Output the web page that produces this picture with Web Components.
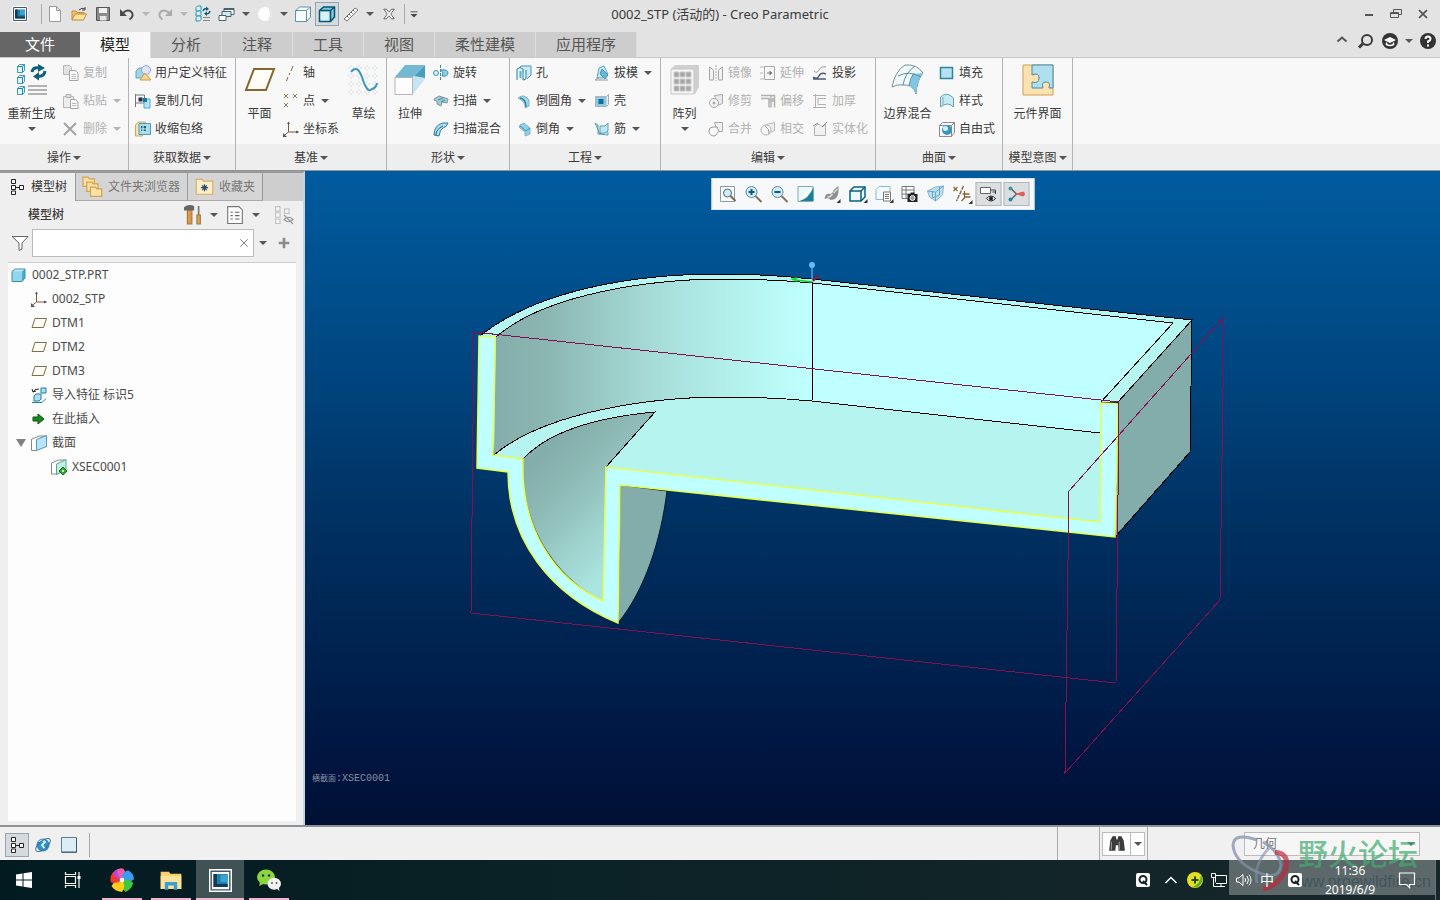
<!DOCTYPE html>
<html lang="zh-CN">
<head>
<meta charset="utf-8">
<title>0002_STP (活动的) - Creo Parametric</title>
<style>
	body {
		margin: 0;
		font-family: "Noto Sans", "Noto Sans CJK SC", sans-serif;
		font-size: 12px;
		line-height: 20px;
		color: #3a3a3a;
		--bar: #e3e3e3;
		--line: #b4b4b4;
		--muted: #b2b2b2;
	}
</style>
</head>
<body>
<cad-app></cad-app>

<script>
// icons are drawn on a 16 unit grid, the large ones on a 32 unit grid
const BLUE = '#2b8fb8';
const cubeSmall = (x, y) => `<path d="M${x} ${y + 1.5}l1.5-1.5h3.500v3.500l-1.500 1.500h-3.500z" fill="#d8f0fa" stroke="${BLUE}"/>`;
const folder = (x, y) => `<path d="M${x} ${y}h4l1 1.500h4v6h-9z" fill="#fbe2ab" stroke="#d3a34f"/>`;
const ICONS = {
	app: '<path d="M0 0h16v16h-16z" fill="#fff"/><path d="M1.500 1.500h13v13h-13z" fill="#f5fafc" stroke="#456"/><path d="M4 3.500h9v9h-9z" fill="#1c7fae"/><path d="M3 3.500h2.500v7h7.500v2h-10z" fill="#173a52"/><path d="M8 4h5v5h-5z" fill="#3aa3cf"/>',
	new: '<path d="M2.500.5h7l4 4v11h-11zM9.500.5v4h4" fill="#fff" stroke="#9a9a9a"/>',
	open: '<path d="M1 14v-9h4l1 1.500h7v3" fill="#f2c36b" stroke="#c28a35"/><path d="M1 14l3-6h11.500l-3 6z" fill="#ffe2a6" stroke="#c28a35"/><path d="M8 4q3-3 6-1m0-2v3h-3" fill="none" stroke="#444"/>',
	save: '<path d="M1.500 1.500h13v13h-13z" fill="#8b8b8b" stroke="#555"/><path d="M4 2h8v5h-8z" fill="#f0f0f0"/><path d="M5 10h6.500v4.500h-6.500z" fill="#e5e5e5"/>',
	undo: '<path d="M4 7q4-4 8-1.500q4 4-1.500 8" fill="none" stroke="#4a4a4a" stroke-width="2"/><path d="M1 3v7h7z" fill="#4a4a4a"/>',
	redo: '<path d="M12 7q-4-4-8-1.500q-4 4 1.500 8" fill="none" stroke="#aaa" stroke-width="2"/><path d="M15 3v7h-7z" fill="#aaa"/>',
	regen: `<g>${cubeSmall(1, 0)}${cubeSmall(1, 5)}${cubeSmall(1, 10)}</g><path d="M8 11.500h7m-7 3h7" stroke="#888"/><path d="M8 5q1-3 4-2m3 2q-1 3.500-4 2.500" fill="none" stroke="#0d6077" stroke-width="1.500"/><path d="M11 .5l3 2.500-3 2zM12 5.500l-3 2 3 2.500z" fill="#0d6077"/>`,
	windows: '<path d="M5 2.500h10v6h-10z" fill="#fff" stroke="#47636e"/><path d="M3 5.500h9v5h-9z" fill="#cfeaf5" stroke="#47636e"/><path d="M0 9.500h7v5h-7z" fill="#fff" stroke="#47636e"/><path d="M5 3.500h10" stroke="#47636e"/>',
	sphere: '<circle cx="8" cy="8" r="7" fill="#fff"/><path d="M12 3q4 5 0 10" fill="none" stroke="#d0d0d0"/>',
	box: '<path d="M.5 4.500l4-3.500h11v10l-4 4.500h-11z" fill="#f7fdff" stroke="#5d94a8"/><path d="M.5 4.500h11v11m0-11l4-3.500" fill="none" stroke="#5d94a8"/>',
	boxDark: '<path d="M.5 4.500l4-3.500h11v10l-4 4.500h-11z" fill="#7fc9e3" stroke="#0a5570" stroke-width="1.500"/><path d="M1.500 5.500h9v9h-9z" fill="#d7f1fa"/><path d="M.5 4.500h11v11m0-11l4-3.500" fill="none" stroke="#0a5570" stroke-width="1.500"/>',
	ruler: '<path d="M1 13l11-11 3 2-11 11z" fill="#fff" stroke="#777"/><path d="M4 10l1.500 1.500m.5-3.500l1.500 1.500m.5-3.500l1.500 1.500m.5-3.500l1.500 1.500" stroke="#555"/>',
	closeWin: '<path d="M2 2.500h3l3 3.500 3-3.500h3l-4 5.500 4 5.500h-3l-3-3.500-3 3.500h-3l4-5.500z" fill="#fff" stroke="#555"/>',
	minimize: '<path d="M4 9h8" stroke="#555" stroke-width="2"/>',
	restore: '<path d="M5.500 6v-2.500h8v5h-3" fill="none" stroke="#555"/><path d="M2.500 6.500h8v5h-8zM2.500 7.500h8" fill="none" stroke="#555"/>',
	close: '<path d="M3.500 3.500l9 9m0-9l-9 9" stroke="#555" stroke-width="2"/>',
	clear: '<path d="M3 3l10 10m0-10l-10 10" stroke="#777" stroke-width="1.200"/>',
	up: '<path d="M3.500 8.500l4.500-4 4.500 4" fill="none" stroke="#555" stroke-width="2"/>',
	search: '<circle cx="9" cy="7" r="5" fill="none" stroke="#3a3a3a" stroke-width="2"/><path d="M5 10.500l-4 4" stroke="#3a3a3a" stroke-width="3"/>',
	learn: '<circle cx="8" cy="8" r="8" fill="#333"/><path d="M2 7l6-3 6 3-6 3z" fill="#fff"/><path d="M4.500 9.500v2q3.500 2 7 0v-2" fill="none" stroke="#fff" stroke-width="1.500"/>',
	help: '<circle cx="8" cy="8" r="8" fill="#333"/><path d="M5.500 6q0-2.500 2.500-2.500t2.500 2.500q0 1.500-2.500 2.500v1.500" fill="none" stroke="#fff" stroke-width="2"/><path d="M7 11.500h2v2h-2z" fill="#fff"/>',
	custom: '<path d="M4 5.500h8" stroke="#444"/><path d="M4 8h8l-4 4z" fill="#444"/>',
	copy: '<path d="M.5.5h6l2 2v7h-8z" fill="#e3e3e3" stroke="#b8b8b8"/><path d="M6.500 5.500h6l2.500 2.500v7.500h-8.500z" fill="#fafafa" stroke="#a5a5a5"/><path d="M8.500 9.500h4.500m-4.500 2h4.500m-4.500 2h4.500" stroke="#bbb"/>',
	paste: '<path d="M.5 3.500h10v11h-10z" fill="#eee" stroke="#b8b8b8"/><path d="M3 1.500h5v3h-5z" fill="#ddd" stroke="#b0b0b0"/><path d="M7.500 6.500h5l2.500 2.500v6.500h-7.500z" fill="#fafafa" stroke="#a5a5a5"/><path d="M9 10.500h4.500m-4.500 2h4.500" stroke="#bbb"/>',
	delete: '<path d="M1 2l12 12m0-12l-12 12" stroke="#a3a3a3" stroke-width="2"/>',
	udf: '<path d="M1 6l3-3h6v7l-3 3h-6z" fill="#9fd3ea" stroke="#5ea3c0"/><circle cx="11" cy="5" r="4.500" fill="#dde4f8" stroke="#97a3cf"/><path d="M10 8l6 7h-11z" fill="#f8d691" stroke="#d09a45"/>',
	copyGeom: '<path d="M.5 1v13m0-12h9v8h-9" fill="none" stroke="#777"/><path d="M3.500 4.500h4v4h-4z" fill="#234"/><path d="M9 6h6v9h-6z" fill="#b9e3f4" stroke="#55aaca"/><path d="M8 5h4v4h-4z" fill="#1877a2"/>',
	shrink: '<path d="M.5 4l3-3h7v12h-3v2h-7z" fill="#f8dfa5" stroke="#c9a75c"/><path d="M4 2.500h11.500v11h-11.500z" fill="#a7dcee" stroke="#4a9fc0"/><path d="M6 5h5v5h-5z" fill="#185b7a"/><path d="M8 5v6m-2-3h6" stroke="#dff"/>',
	axis: '<path d="M10 1l-2 5m-1 2l-1 2m-1 2l-1.500 4" stroke="#8c6547"/>',
	point: '<path d="M1 1l4 4m0-4l-4 4m9-4l4 4m0-4l-4 4m-9 5l4 4m0-4l-4 4" stroke="#8a794c"/>',
	csys: '<path d="M5.500 2v9h10m-10 0l-5 4" fill="none" stroke="#7d5838"/><path d="M4 3l1.500-2.500 1.500 2.500zM13 9.500l3 1.500-3 1.500zM0 12v4h4z" fill="#555"/>',
	revolve: '<path d="M7.500 0v16" stroke="#3c88a6" stroke-dasharray="3 1"/><circle cx="3" cy="8" r="2.500" fill="#d7effa" stroke="#4193b5"/><path d="M8 5q7-1 7 3t-6 3l1-3z" fill="#8fcde5" stroke="#4193b5"/>',
	sweep: '<path d="M1 6l5-3 9 3-1 4-5-1-1 4-4-2v-3l-3-1z" fill="#a6c9d6" stroke="#7e969f"/><path d="M5 7l5-2m-2 4l4-2" stroke="#3789a8"/>',
	swept: '<path d="M1 14q0-10 9-12l5 0q-1 4-5 5q-3 1-4 8z" fill="#b0e0f0" stroke="#287ea3"/><path d="M3 14q0-6 7-9" fill="none" stroke="#2c5f74"/>',
	hole: '<path d="M2 4l3-3h10v9l-4 4" fill="#c9ecf7" stroke="#4b96b4"/><path d="M1 15v-11q3-3 6 0v11q3 0 3-2v-8" fill="#e2f5fb" stroke="#287ea3"/><path d="M3.500 13v-7h2v7" fill="#57afd0"/>',
	round: '<path d="M2 5q6-5 11 2v6l-4 2q1-6-7-10z" fill="#9ed8ea" stroke="#86b3c1"/><path d="M4 5q6 1 6 9" fill="none" stroke="#2f8aa9" stroke-width="1.500"/>',
	chamfer: '<path d="M4 4l4-2 6 5v6l-5 2v-4l-6-5z" fill="#8fd0e8" stroke="#86b3c1"/><path d="M4 5l6 5 4-3" fill="none" stroke="#4194b3"/>',
	draft: '<path d="M5 3l5-2 4 8-5 4h-6z" fill="#c6ecf7" stroke="#5ea3c0"/><path d="M8 4l6 6-3 4-5-5z" fill="#69b7d4" stroke="#3f92b2"/><path d="M1 15l4-3m-4 3h13" stroke="#8a979d"/>',
	shell: '<path d="M1.500 3.500h11v10h-11z" fill="#8dc9e0" stroke="#a4b7bf"/><path d="M4.500 6h5v5h-5z" fill="#156f99"/><path d="M12.500 3.500l2-2v10l-2 2" fill="#e4edf0" stroke="#aaa"/>',
	rib: '<path d="M1 2l3 2v9l10 1v-3l-3-1-5 3z" fill="#c6e8f4" stroke="#5c9db6"/><path d="M6 5h5l3-3v8l-3 2h-5z" fill="#bfe7f4" stroke="#5c9db6"/>',
	mirror: '<path d="M8 0v16" stroke="#aaa" stroke-dasharray="2 1"/><path d="M5.500 5v10h-4v-13zM10.500 5v10h4v-13z" fill="#f2f2f2" stroke="#a5a5a5"/>',
	extend: '<path d="M4.500 1.500h10v13h-10z" fill="#f6f6f6" stroke="#a9a9a9"/><path d="M0 2h4m-4 6h3m-3 6h4" stroke="#bbb"/><path d="M7 8h4" stroke="#777"/><path d="M9.500 5.500l3 2.500-3 2.500z" fill="#777"/>',
	project: '<path d="M2 6q3 3 5-1t7-3" fill="none" stroke="#999"/><path d="M1 12q4 3 6-1t7-2m-13 5h13" fill="none" stroke="#4b587a" stroke-width="1.500"/>',
	trim: '<path d="M6.500 2.500l8-1v9l-5 2z" fill="#e9e9e9" stroke="#aaa"/><circle cx="6" cy="10" r="4.500" fill="#f5f5f5" stroke="#aaa"/><circle cx="6" cy="10" r="1.500" fill="#aaa"/>',
	offset: '<path d="M1 2.500h13.500v12m-13.500-9h8v9m2-12v12" fill="none" stroke="#b0b0b0" stroke-width="1.500"/><path d="M9 5h5v4h-5z" fill="#bbb"/>',
	thicken: '<path d="M3.500 1v14M1 2.500h13m-8 3v6h8m-8-6h8M1 14.500h13" fill="none" stroke="#b0b0b0"/>',
	merge: '<path d="M6.500 1.500h8v9h-5z" fill="#f1f1f1" stroke="#aaa"/><path d="M1 10q0-4 4-4h4l2 4-4 5q-6 0-6-5z" fill="#fafafa" stroke="#999"/>',
	intersect: '<path d="M6.500 3.500l8-2v8l-4 2z" fill="#eee" stroke="#bbb"/><circle cx="6" cy="9" r="5" fill="#f8f8f8" stroke="#b5b5b5"/><path d="M5 5q5 3 4 8" fill="none" stroke="#999"/>',
	solidify: '<path d="M2.500 14.500v-8q3-5 6-2t5-2v12z" fill="#f1f1f1" stroke="#b0b0b0"/><path d="M1 5l5-3m4 4l5-5" stroke="#888"/>',
	fill: '<path d="M1.500 2.500h12v11h-12z" fill="#b5e2f1" stroke="#3382a1" stroke-width="1.500"/>',
	style: '<path d="M1.500 4q6-6 13 1v9q-6-6-13 0z" fill="#c6ebf7" stroke="#6aa3b8"/><path d="M4 4v8" stroke="#8ab"/>',
	freestyle: '<path d="M.5 4.500l3-3h12v10l-3 4h-12zM.5 4.500h12v11m0-11l3-3" fill="none" stroke="#8b8b8b"/><circle cx="8" cy="9" r="5" fill="#3c97bf"/><circle cx="6.500" cy="7.500" r="2.500" fill="#d3f0fa"/>',
	tree: '<path d="M2.500.5h4v4h-4zM2.500 6.500h4v4h-4zM2.500 12h4v3.500h-4zM10.500 6.500h4v4h-4z" fill="#fff" stroke="#222"/><path d="M7 8.500h3" stroke="#222"/>',
	folders: `${folder(0, 0)}${folder(3, 4)}${folder(6, 8)}`,
	fav: '<path d="M1 2h5l1 1.500h8v11h-14z" fill="#fdecc6" stroke="#d8b06b"/><path d="M8 6v6m-3-3h6m-5-2l4 4m0-4l-4 4" stroke="#234f73"/>',
	tools: '<path d="M0 1q4-3 9-1v4h-9z" fill="#666"/><path d="M3 4h4v12h-4z" fill="#d7994a" stroke="#a5763c"/><path d="M13 0v8" stroke="#777" stroke-width="1.500"/><path d="M11.500 8h3v8h-3z" fill="#d9a45e" stroke="#a07439"/>',
	list: '<path d="M1.500.5h10l3 3v12h-13z" fill="#fff" stroke="#777"/><path d="M4 5.500h2m2 0h4m-8 3h2m2 0h4m-8 3h2m2 0h4" stroke="#666"/>',
	treeOff: '<path d="M.5.5h4v4h-4zM.5 6h4v4h-4zM.5 11.500h4v4h-4zM8.500 2.500h4v4h-4z" fill="#f5f5f5" stroke="#c2c2c2"/><path d="M8 12q4-4 8 0q-4 4-8 0zM8 8l8 8" fill="none" stroke="#999"/>',
	funnel: '<path d="M0 1.500h16l-6 6.500v6l-3 1.500v-7.500z" fill="#fff" stroke="#666"/>',
	plus: '<path d="M8 2v12m-6-6h12" stroke="#8b8b8b" stroke-width="3"/>',
	part: '<path d="M1 4.500l3-2.500h10v9l-3 3.500h-10z" fill="#4aa9cf"/><path d="M1 4.500h10v10h-10z" fill="#8fd6ee"/><path d="M1 4.500l3-2.500h10l-3 2.500z" fill="#c9eefa"/><path d="M1 4.500l3-2.500h10v9l-3 3.500h-10z" fill="none" stroke="#3c8dac"/>',
	datum: '<path d="M4 3.500h11.500l-3 9h-11.500z" fill="#fffdf5" stroke="#7f6d4a"/>',
	import: '<path d="M3 9l2-2h5v5l-2 2h-5zM10 1h5v5h-5z" fill="#ade0f2" stroke="#1a7ca5"/><path d="M1 15.500h10l4-4" fill="none" stroke="#1a7ca5"/><path d="M2 5q1-3 6-3m-6 3l-1-3m1 3l3-1" fill="none" stroke="#222"/>',
	insert: '<path d="M2 6h5v-3l6 5-6 5v-3h-5z" fill="#138a1a" stroke="#0a5210"/>',
	section: '<path d="M1 4l7-3h7" fill="none" stroke="#888"/><path d="M.5 4v11.500h5" fill="#fff" stroke="#888"/><path d="M5.500 4.500l10-4v11l-10 4z" fill="#b9e3f8" stroke="#4f97bd"/>',
	xsec: '<path d="M.5 4l7-3h6v10l-7 4h-6z" fill="#fff" stroke="#888"/><path d="M5.500 5l9.500-4.500v10l-9.500 5z" fill="#c3eee6" stroke="#51a594"/><path d="M12 8l4 4-4 4-4-4z" fill="#32ad2e" stroke="#146a16"/><circle cx="12" cy="12" r="1" fill="#fff"/>',
	refit: '<path d="M1 .5h14v15h-14z" fill="#fff" stroke="#8d9ba4"/><circle cx="8" cy="7" r="4" fill="#d3ecf6" stroke="#3a6f88"/><path d="M11 10l5 5" stroke="#7a6648" stroke-width="2"/>',
	zoomIn: '<circle cx="6" cy="6" r="5.500" fill="#d3ecf6" stroke="#5b88a0"/><path d="M3 6h6m-3-3v6" stroke="#0b5c83" stroke-width="2"/><path d="M10 10l6 6" stroke="#86705a" stroke-width="2"/>',
	zoomOut: '<circle cx="6" cy="6" r="5.500" fill="#d3ecf6" stroke="#5b88a0"/><path d="M3 6h6" stroke="#0b5c83" stroke-width="2"/><path d="M10 10l6 6" stroke="#86705a" stroke-width="2"/>',
	repaint: '<path d="M.5.5h15v15h-15z" fill="#eef9fc" stroke="#7fabb6"/><path d="M16 1v14h-14q9-2 14-14z" fill="#1f7f99"/><path d="M5 12l8-8" stroke="#fff" stroke-width="2"/>',
	render: '<path d="M1 13q1-6 5-5q4-1 4-4l5-4v6q-1 8-8 8q-2-3-6-1z" fill="#8f8f8f"/><path d="M4 11q3 0 5-3m1-1l4-4" stroke="#ddd" stroke-width="1.500" fill="none"/><path d="M17 13v4h-4z" fill="#333"/>',
	display: '<path d="M.5 5l4-4h11v10l-4 4h-11z" fill="#eaf8fc" stroke="#0b5f7c" stroke-width="1.500"/><path d="M.5 5h11v10m0-10l4-4" fill="none" stroke="#0b5f7c" stroke-width="1.500"/><path d="M18 13v4h-4z" fill="#333"/>',
	views: '<path d="M.5 3.500l3-3h11v8l-3 5h-11z" fill="#f3fbfe" stroke="#8fb8c7"/><path d="M8 6h7v9h-7z" fill="#fff" stroke="#777"/><path d="M9.500 8.500h4m-4 2h4m-4 2h4" stroke="#777"/><path d="M18 13v4h-4z" fill="#333"/>',
	viewMgr: '<path d="M.5.5h12v12h-12zM.5 4h12M.5 8h12M4.500.5v12" fill="#fff" stroke="#777"/><path d="M6 8h10v8h-10z" fill="#222"/><path d="M9 6.500h4v2h-4z" fill="#222"/><circle cx="11" cy="12" r="2.500" fill="#999" stroke="#eee"/>',
	persp: '<path d="M0 5l8-4 8-1-1 9-7 6-6-4z" fill="#b9e0ef" stroke="#8ab8ca"/><path d="M0 5l8 1 8-6m-8 6v9m-3-10v7l7-3v-8" fill="none" stroke="#6fa9bf"/>',
	datums: '<path d="M0 1l4 4m0-4l-4 4" stroke="#8a6a3a" stroke-width="1.300"/><path d="M10 0l-7 15" stroke="#7a5a3a" stroke-width="1.300" stroke-dasharray="4 1"/><path d="M9 8h7m-5-3v7l-3 3m3-4h6" fill="none" stroke="#8a6238" stroke-width="1.300"/><path d="M19 14v4h-4z" fill="#333"/>',
	annot: '<path d="M0 1.500h10v6h-10z" fill="#fff" stroke="#666"/><path d="M10 4h5v4m-3-2h3" fill="none" stroke="#444"/><path d="M6 12.500q4.500-5 9 0q-4.500 5-9 0z" fill="#fff" stroke="#222"/><circle cx="10.500" cy="12.500" r="2" fill="#222"/>',
	spin: '<path d="M2 2l6 6-6 6" fill="none" stroke="#566" stroke-width="1.500"/><path d="M8 8l7-2v4z" fill="#e35b56" stroke="#e35b56"/><circle cx="2" cy="2.500" r="2" fill="#3f9a8c"/><circle cx="2" cy="13.500" r="2" fill="#2c83ad"/><circle cx="14.500" cy="8" r="2" fill="#e35b56"/>',
	browser: '<circle cx="8" cy="8" r="6.500" fill="#2f8fcb"/><path d="M4 5q4-3 6 0l-3 3 3 4" fill="none" stroke="#cdeeff" stroke-width="2"/><ellipse cx="8" cy="8" rx="9" ry="4" transform="rotate(-40 8 8)" fill="none" stroke="#3c6f93"/>',
	full: '<path d="M.5.5h15v15h-15z" fill="#dceef5" stroke="#5f7f8e"/><path d="M1 15h14.500v-14" fill="none" stroke="#3b5a68"/>',
	find: '<path d="M2 5l2-4h3l.5 3h1l.5-3h3l2 4 1 9h-5.500l-.5-5h-2l-.5 5h-5.500z" fill="#3b3b3b"/><path d="M3 6v7m7-7v7" stroke="#999"/>',
	win: '<path d="M0 2.500l6.500-1v6h-6.500zM7.500 1.300l8.500-1.300v7.500h-8.500zM0 8.500h6.500v6l-6.500-1zM7.500 8.500h8.500v7.500l-8.500-1.300z" fill="#fff"/>',
	taskView: '<path d="M.5 0v2.500h10v-2.500m-10 16v-2.500h10v2.500m-10-11.500h10v7h-10zM14 0v16" fill="none" stroke="#fff" stroke-width="1.200"/><path d="M12.500 4h3v3h-3z" fill="#fff"/>',
	wheel: '<path d="M8 8q-5-1-5-6q3-2.500 6-1.500q3 4-1 7.500z" fill="#f35aa5"/><path d="M8 8q-1-5 4-6.500q4 2 4 6q-4 4-8 .5z" fill="#3a9bf0"/><path d="M8 8q5-1 7.500 2q-1 4-5 6q-4-3-2.500-8z" fill="#3cc93b"/><path d="M8 8q3 4 0 8q-5-.5-7-4q3-5 7-4z" fill="#ffcd20"/><path d="M8 8q-4 3-7.500 1.500q-1-5 3-8q1 5 4.500 6.500z" fill="#f2392f"/><path d="M8 8q-5-1-6-5l3-2q0 5 3 7z" fill="#b14be0"/><circle cx="8" cy="8" r="1.500" fill="#fff"/>',
	explorer: '<path d="M.5 2h6l1 1.500h8v11h-15z" fill="#f7cf6b"/><path d="M.5 5h15v9.500h-15z" fill="#fde39a"/><path d="M3.500 15v-5.500h9v5.500h-2.500v-3h-4v3z" fill="#3d9dd0"/>',
	wechat: '<ellipse cx="6" cy="6" rx="6" ry="5" fill="#8bd63f"/><path d="M2 9l-.5 3 4-2z" fill="#8bd63f"/><circle cx="4" cy="5" r=".8" fill="#234"/><circle cx="8" cy="5" r=".8" fill="#234"/><ellipse cx="11.500" cy="10.500" rx="4.500" ry="4" fill="#f2f2f2"/><path d="M13 13.500l2 2-.5-3z" fill="#f2f2f2"/><circle cx="10" cy="10" r=".6" fill="#555"/><circle cx="13" cy="10" r=".6" fill="#555"/>',
	trayQ: '<rect x="1" y="1" width="14" height="14" rx="2" fill="#fff"/><circle cx="8" cy="7.500" r="3.500" fill="none" stroke="#172426" stroke-width="2"/><path d="M8 9l4 4" stroke="#172426" stroke-width="2"/>',
	trayUp: '<path d="M2.500 11l5.500-5.500 5.500 5.500" fill="none" stroke="#fff" stroke-width="1.500"/>',
	guard: '<circle cx="8" cy="8" r="8" fill="#e5df1e"/><path d="M14 3a8 8 0 0 1-9 12q8-2 9-12z" fill="#5cae2a"/><path d="M8 4.500v7m-3.500-3.500h7" stroke="#1b4a16" stroke-width="2"/>',
	net: '<path d="M4.500 3.500h11v8h-11zM10 12v2.500m-4 0h8" fill="none" stroke="#fff"/><path d="M.5 1.500h4v4h-4zM2.500 6v8.500h4" fill="#172426" stroke="#fff"/>',
	volume: '<path d="M1.500 6h2.500l4-3.500v11l-4-3.500h-2.500zM10 6q1.500 2 0 4m2-6q3 4 0 8m2-9.500q4 5.500 0 11" fill="none" stroke="#fff"/>',
	notify: '<path d="M.5 1h15v11.500h-5v3l-3-3h-7z" fill="none" stroke="#fff" stroke-width="1.200"/>',

	regenBig: '<path d="M1.500 2.500l2-2h5v6l-2 2h-5zM1.500 13.500l2-2h5v6l-2 2h-5zM1.500 24.500l2-2h5v6l-2 2h-5z" fill="#e3f5fc" stroke="#3d9abd"/><path d="M1.500 2.500h5v6m0-6l2-2M1.500 13.500h5v6m0-6l2-2M1.500 24.500h5v6m0-6l2-2" fill="none" stroke="#1b86ae"/><path d="M12 22h19m-19 4h19m-19 4h19" stroke="#9a9a9a" stroke-width="1.500"/><path d="M16 8q1-5 7-4m6 3q-1 6-7 5" fill="none" stroke="#0d6077" stroke-width="3"/><path d="M22 0l7 4-7 4zM23 8l-6 4.500 6 4z" fill="#0d6077"/>',
	planeBig: '<path d="M10 5h20l-8 21h-20z" fill="#fffdf6" stroke="#86662f" stroke-width="2"/>',
	sketchBig: '<path d="M3 1v30m8-30v30m8-30v30m8-30v30M0 4h31M0 12h31M0 20h31M0 28h31" stroke="#d6dde0" stroke-dasharray="2 2"/><path d="M3 8q6-8 11 5q5 17 10 12q4-1 5-6" fill="none" stroke="#3b97bf" stroke-width="2"/>',
	extrudeBig: '<path d="M1 13l10-12h20v13l-12 16h-18z" fill="#cfebf5"/><path d="M1 13l10-12h20l-12 12z" fill="#74b9d4"/><path d="M31 1v14l-12 15v-17z" fill="#c4e5f1"/><path d="M20 12l11-11v13z" fill="#4a9dc0"/><path d="M1 13.500h17.500v17h-17.500z" fill="#fdfdfd" stroke="#b5b5b5"/>',
	patternBig: '<path d="M2 5l4-4h24v22l-4 7h-24z" fill="#cfcfcf"/><path d="M2 5h23v25h-23z" fill="#f4f4f4" stroke="#c5c5c5"/><g fill="#a5a5a5" stroke="#ccc"><path d="M5 8h5v5h-5zM11 8h5v5h-5zM17 8h5v5h-5zM5 15h5v5h-5zM11 15h5v5h-5zM17 15h5v5h-5zM5 22h5v5h-5zM11 22h5v5h-5zM17 22h5v5h-5z"/></g>',
	blendBig: '<path d="M0 23q3-16 13-22q12-1 18 8q-6 7-7 21q-3-10-12-9q-7-1-12 2z" fill="#eef8fc" stroke="#7b8f98"/><path d="M21 10l10-1q-6 7-7 21q-2-5-7-8z" fill="#7fc6e3"/><path d="M11 21q2-12 12-19m-17 10q11-6 23 1m-12 9q1-8 5-13" fill="none" stroke="#5b8da2"/>',
	interfaceBig: '<path d="M1 1h30v30h-30z" fill="#fbe2b0" stroke="#cf9f51"/><path d="M10 1h21v23h-4q2-6-3-6t-3 6h-11v-6q7 2 7-4t-7-3z" fill="#aee0f0" stroke="#4b8ba2"/>'
};

class CadElement extends HTMLElement {
	connectedCallback() {
		if(this.shadowRoot) return;
		this.attachShadow({ mode: 'open' });
		const template = document.createElement('template');
		template.innerHTML = `
			<style>
				* { box-sizing: border-box; }
				button {
					margin: 0;
					padding: 0;
					border: 0;
					background: none;
					font: inherit;
					color: inherit;
				}
				:host { display: block; box-sizing: border-box; }
				${this.styles()}
			</style>
			${this.template()}
		`;
		this.shadowRoot.appendChild(template.content.cloneNode(true));
	}
	styles() { return ''; }
	template() { return '<slot></slot>'; }
}

class CadIcon extends CadElement {
	styles() {
		const size = this.getAttribute('size') || 16;
		return `
			:host { display: inline-block; flex: none; width: ${size}px; height: ${size}px; }
			svg { display: block; width: 100%; height: 100%; overflow: visible; }
		`;
	}
	template() {
		const name = this.getAttribute('name');
		const grid = name.endsWith('Big') ? 32 : 16;
		return `<svg viewBox="0 0 ${grid} ${grid}" aria-hidden="true">${ICONS[name]}</svg>`;
	}
}

class CadArrow extends CadElement {
	styles() {
		return `
			:host {
				flex: none;
				width: 0;
				border: solid transparent;
				border-width: 4px 4px 0;
				border-top-color: #555;
			}
			:host([muted]) { border-top-color: #b5b5b5; }
			:host([toggle]) { border-width: 8px 5px 0; border-top-color: #808080; }
		`;
	}
	template() { return ''; }
}

class QuickButton extends CadElement {
	styles() {
		return `
			button {
				display: flex;
				align-items: center;
				justify-content: center;
				width: 24px;
				height: 24px;
			}
			:host([on]) button { background: #d4dadd; border: 1px solid #93a5ae; }
			:host([drop]) button { width: 14px; }
		`;
	}
	template() {
		const label = this.getAttribute('label');
		const size = this.getAttribute('size') || 16;
		return `<button aria-label="${label}">${this.hasAttribute('drop')
			? `<cad-arrow ${this.hasAttribute('muted') ? 'muted' : ''}></cad-arrow>`
			: `<cad-icon name="${this.getAttribute('icon')}" size="${size}"></cad-icon>`}</button>`;
	}
}

class TitleBar extends CadElement {
	styles() {
		return `
			:host {
				display: grid;
				grid-template-columns: 1fr auto 1fr;
				align-items: center;
				height: 28px;
				background: var(--bar);
			}
			.quick, .window { display: flex; align-items: center; }
			.quick { padding-left: 8px; }
			.window { justify-content: flex-end; gap: 3px; padding-right: 5px; }
			h1 { margin: 0; font-size: 13px; font-weight: 400; line-height: 20px; }
			i { width: 1px; height: 20px; background: #aaa; }
			.first { margin: 0 1px 0 9px; }
			.last { margin: 0 2px 0 3px; }
		`;
	}
	template() {
		return `
			<div class="quick">
				<quick-button icon="app" label="应用程序"></quick-button>
				<i class="first"></i>
				<quick-button icon="new" label="新建"></quick-button>
				<quick-button icon="open" label="打开"></quick-button>
				<quick-button icon="save" label="保存"></quick-button>
				<quick-button icon="undo" label="撤消"></quick-button>
				<quick-button drop muted label="撤消列表"></quick-button>
				<quick-button icon="redo" label="重做"></quick-button>
				<quick-button drop muted label="重做列表"></quick-button>
				<quick-button icon="regen" label="重新生成"></quick-button>
				<quick-button icon="windows" label="窗口"></quick-button>
				<quick-button drop label="窗口列表"></quick-button>
				<quick-button icon="sphere" label="外观"></quick-button>
				<quick-button drop label="外观列表"></quick-button>
				<quick-button icon="box" label="消隐"></quick-button>
				<quick-button icon="boxDark" label="带边着色" on></quick-button>
				<quick-button icon="ruler" label="测量"></quick-button>
				<quick-button drop label="测量列表"></quick-button>
				<quick-button icon="closeWin" size="14" label="关闭窗口"></quick-button>
				<i class="last"></i>
				<quick-button icon="custom" size="14" label="自定义" style="margin-left:-5px"></quick-button>
			</div>
			<h1>0002_STP (活动的) - Creo Parametric</h1>
			<div class="window">
				<quick-button icon="minimize" label="最小化"></quick-button>
				<quick-button icon="restore" label="还原"></quick-button>
				<quick-button icon="close" size="14" label="关闭"></quick-button>
			</div>
		`;
	}
}

class RibbonTabs extends CadElement {
	styles() {
		return `
			:host {
				display: flex;
				justify-content: space-between;
				height: 30px;
				padding-top: 4px;
				background: var(--bar);
				border-bottom: 1px solid #c8c8c8;
			}
			nav { display: flex; }
			nav button {
				height: 25px;
				padding: 0 20px;
				border-right: 1px solid #dedede;
				background: #cdcdcd;
				font-size: 15px;
				line-height: 25px;
				color: #555;
			}
			nav .file { padding: 0 25px; border: 0; background: #666; color: #fff; }
			nav .on { height: 26px; padding-bottom: 1px; background: #f8f8f8; color: #222; }
			.help { display: flex; align-items: center; padding-bottom: 8px; }
		`;
	}
	template() {
		const tabs = ['分析', '注释', '工具', '视图', '柔性建模', '应用程序'];
		return `
			<nav>
				<button class="file">文件</button>
				<button class="on">模型</button>
				${tabs.map(tab => `<button>${tab}</button>`).join('')}
			</nav>
			<div class="help">
				<quick-button icon="up" label="最小化功能区"></quick-button>
				<quick-button icon="search" label="搜索"></quick-button>
				<quick-button icon="learn" label="学习"></quick-button>
				<quick-button drop label="学习列表"></quick-button>
				<quick-button icon="help" label="帮助"></quick-button>
			</div>
		`;
	}
}

class RibbonGroup extends CadElement {
	styles() {
		return `
			:host {
				display: flex;
				flex-direction: column;
				border-right: 1px solid var(--line);
			}
			.body { display: flex; height: 86px; padding-top: 1px; }
			footer { display: flex; justify-content: center; height: 26px; padding-top: 1px; background: #eee; }
			footer button { display: flex; align-items: center; gap: 2px; }
		`;
	}
	template() {
		return `
			<div class="body"><slot></slot></div>
			<footer><button>${this.getAttribute('label')}<cad-arrow></cad-arrow></button></footer>
		`;
	}
}

class RibbonColumn extends CadElement {
	styles() {
		return `:host { width: ${this.getAttribute('width')}px; }`;
	}
}

class RibbonButton extends CadElement {
	styles() {
		return `
			button {
				display: flex;
				align-items: center;
				gap: 4px;
				height: 28px;
				white-space: nowrap;
			}
			button:disabled { color: var(--muted); }
			cad-arrow { margin-left: 2px; }
			:host([big]) { width: ${this.getAttribute('width')}px; }
			:host([big]) button {
				flex-direction: column;
				width: 100%;
				height: 84px;
				padding-top: 5px;
				gap: 8px;
			}
			:host([big]) cad-arrow { margin: -5px 0 0; }
		`;
	}
	template() {
		const off = this.hasAttribute('off');
		return `
			<button ${off ? 'disabled' : ''}>
				<cad-icon name="${this.getAttribute('icon')}" size="${this.hasAttribute('big') ? 32 : 16}"></cad-icon>
				<span><slot></slot></span>
				${this.hasAttribute('drop') ? `<cad-arrow ${off ? 'muted' : ''}></cad-arrow>` : ''}
			</button>
		`;
	}
}

class CadRibbon extends CadElement {
	styles() {
		return `
			:host {
				display: flex;
				height: 113px;
				background: #f8f8f8;
				border-bottom: 1px solid #8d9599;
			}
			.pad { padding-left: 6px; }
			.rest { flex: 1; background: linear-gradient(#f8f8f8 86px, #eee 86px); }
		`;
	}
	template() {
		return `
			<ribbon-group label="操作">
				<ribbon-button big drop icon="regenBig" width="63">重新生成</ribbon-button>
				<ribbon-column width="65">
					<ribbon-button off icon="copy">复制</ribbon-button>
					<ribbon-button off drop icon="paste">粘贴</ribbon-button>
					<ribbon-button off drop icon="delete">删除</ribbon-button>
				</ribbon-column>
			</ribbon-group>
			<ribbon-group label="获取数据">
				<ribbon-column class="pad" width="106">
					<ribbon-button icon="udf">用户定义特征</ribbon-button>
					<ribbon-button icon="copyGeom">复制几何</ribbon-button>
					<ribbon-button icon="shrink">收缩包络</ribbon-button>
				</ribbon-column>
			</ribbon-group>
			<ribbon-group label="基准">
				<ribbon-button big icon="planeBig" width="47">平面</ribbon-button>
				<ribbon-column width="58">
					<ribbon-button icon="axis">轴</ribbon-button>
					<ribbon-button drop icon="point">点</ribbon-button>
					<ribbon-button icon="csys">坐标系</ribbon-button>
				</ribbon-column>
				<ribbon-button big icon="sketchBig" width="45">草绘</ribbon-button>
			</ribbon-group>
			<ribbon-group label="形状">
				<ribbon-button big icon="extrudeBig" width="46">拉伸</ribbon-button>
				<ribbon-column width="76">
					<ribbon-button icon="revolve">旋转</ribbon-button>
					<ribbon-button drop icon="sweep">扫描</ribbon-button>
					<ribbon-button icon="swept">扫描混合</ribbon-button>
				</ribbon-column>
			</ribbon-group>
			<ribbon-group label="工程">
				<ribbon-column class="pad" width="84">
					<ribbon-button icon="hole">孔</ribbon-button>
					<ribbon-button drop icon="round">倒圆角</ribbon-button>
					<ribbon-button drop icon="chamfer">倒角</ribbon-button>
				</ribbon-column>
				<ribbon-column width="66">
					<ribbon-button drop icon="draft">拔模</ribbon-button>
					<ribbon-button icon="shell">壳</ribbon-button>
					<ribbon-button drop icon="rib">筋</ribbon-button>
				</ribbon-column>
			</ribbon-group>
			<ribbon-group label="编辑">
				<ribbon-button big drop icon="patternBig" width="47">阵列</ribbon-button>
				<ribbon-column width="52">
					<ribbon-button off icon="mirror">镜像</ribbon-button>
					<ribbon-button off icon="trim">修剪</ribbon-button>
					<ribbon-button off icon="merge">合并</ribbon-button>
				</ribbon-column>
				<ribbon-column width="52">
					<ribbon-button off icon="extend">延伸</ribbon-button>
					<ribbon-button off icon="offset">偏移</ribbon-button>
					<ribbon-button off icon="intersect">相交</ribbon-button>
				</ribbon-column>
				<ribbon-column width="63">
					<ribbon-button icon="project">投影</ribbon-button>
					<ribbon-button off icon="thicken">加厚</ribbon-button>
					<ribbon-button off icon="solidify">实体化</ribbon-button>
				</ribbon-column>
			</ribbon-group>
			<ribbon-group label="曲面">
				<ribbon-button big icon="blendBig" width="63">边界混合</ribbon-button>
				<ribbon-column width="63">
					<ribbon-button icon="fill">填充</ribbon-button>
					<ribbon-button icon="style">样式</ribbon-button>
					<ribbon-button icon="freestyle">自由式</ribbon-button>
				</ribbon-column>
			</ribbon-group>
			<ribbon-group label="模型意图">
				<ribbon-button big icon="interfaceBig" width="69">元件界面</ribbon-button>
			</ribbon-group>
			<div class="rest"></div>
		`;
	}
}

class TreeItem extends CadElement {
	styles() {
		const level = Number(this.getAttribute('level') || 0);
		return `
			:host {
				display: flex;
				align-items: center;
				gap: 5px;
				height: 24px;
				padding-left: ${level * 20}px;
				color: #4a4a4a;
			}
			:host([open]) { padding-left: ${level * 20 - 15}px; }
		`;
	}
	template() {
		return `
			${this.hasAttribute('open') ? '<button aria-label="折叠"><cad-arrow toggle></cad-arrow></button>' : ''}
			<cad-icon name="${this.getAttribute('icon')}"></cad-icon>
			<span><slot></slot></span>
		`;
	}
}

class SidePanel extends CadElement {
	styles() {
		return `
			:host {
				display: flex;
				flex-direction: column;
				background: #efefef;
				border-top: 2px solid #999;
				border-right: 2px solid #c9d3da;
			}
			nav { display: flex; height: 28px; background: #cecece; }
			nav button {
				display: flex;
				align-items: center;
				gap: 5px;
				padding: 0 7px;
				border-right: 1px solid #999;
				border-bottom: 1px solid #aaa;
				background: #d5d5d5;
				color: #777;
			}
			nav .on { padding: 0 8px 0 9px; gap: 6px; background: #efefef; border-bottom: 0; color: #333; }
			.head { display: flex; align-items: center; height: 28px; padding: 0 7px 0 28px; }
			.head h2 { flex: 1; margin: 0; font-size: 12px; font-weight: 500; }
			.tools { display: flex; align-items: center; gap: 2px; }
			.hide { padding-left: 7px; }
			.filter { display: flex; align-items: center; height: 28px; padding: 0 7px 0 12px; }
			.field {
				display: flex;
				flex: 1;
				align-items: center;
				height: 28px;
				margin-left: 4px;
				border: 1px solid #bbb;
				background: #fff;
			}
			input { flex: 1; min-width: 0; border: 0; outline: 0; background: none; font: inherit; }
			.field button, .filter .drop, .plus {
				display: flex;
				align-items: center;
				justify-content: center;
				width: 18px;
				height: 20px;
			}
			.filter .plus { width: 24px; }
			.tree {
				flex: 1;
				margin: 5px 7px 4px 8px;
				padding: 0 3px;
				border-top: 1px solid #ccc;
				background: #fdfdfd;
			}
		`;
	}
	template() {
		return `
			<nav>
				<button class="on"><cad-icon name="tree"></cad-icon>模型树</button>
				<button><cad-icon name="folders" size="20"></cad-icon>文件夹浏览器</button>
				<button><cad-icon name="fav" size="19"></cad-icon>收藏夹</button>
			</nav>
			<div class="head">
				<h2>模型树</h2>
				<div class="tools">
					<quick-button icon="tools" label="设置" size="18"></quick-button>
					<quick-button drop label="设置列表"></quick-button>
					<quick-button icon="list" label="显示" size="18"></quick-button>
					<quick-button drop label="显示列表"></quick-button>
					<quick-button class="hide" icon="treeOff" label="隐藏树" size="18"></quick-button>
				</div>
			</div>
			<div class="filter">
				<cad-icon name="funnel"></cad-icon>
				<div class="field">
					<input type="text" aria-label="过滤模型树">
					<button aria-label="清除"><cad-icon name="clear" size="12"></cad-icon></button>
				</div>
				<button class="drop" aria-label="过滤选项"><cad-arrow></cad-arrow></button>
				<button class="plus" aria-label="添加"><cad-icon name="plus" size="14"></cad-icon></button>
			</div>
			<div class="tree">
				<tree-item icon="part">0002_STP.PRT</tree-item>
				<tree-item level="1" icon="csys">0002_STP</tree-item>
				<tree-item level="1" icon="datum">DTM1</tree-item>
				<tree-item level="1" icon="datum">DTM2</tree-item>
				<tree-item level="1" icon="datum">DTM3</tree-item>
				<tree-item level="1" icon="import">导入特征 标识5</tree-item>
				<tree-item level="1" icon="insert">在此插入</tree-item>
				<tree-item level="1" icon="section" open>截面</tree-item>
				<tree-item level="2" icon="xsec">XSEC0001</tree-item>
			</div>
		`;
	}
}

class ViewToolbar extends CadElement {
	styles() {
		return `
			:host {
				display: flex;
				width: 323px;
				padding: 3px;
				background: #f6f8f9;
				border: 1px solid #dfe9ef;
			}
			button {
				display: flex;
				flex: 1;
				align-items: center;
				justify-content: center;
				height: 24px;
				border: 1px solid transparent;
			}
			.on { margin: 0 1px; background: #dcdfe1; border-color: #b2b6b9; }
		`;
	}
	template() {
		const tools = [
			['refit', '重新调整'], ['zoomIn', '放大'], ['zoomOut', '缩小'], ['repaint', '重画'],
			['render', '渲染选项'], ['display', '显示样式'], ['views', '已保存方向'], ['viewMgr', '视图管理器'],
			['persp', '透视图'], ['datums', '基准显示'], ['annot', '注释显示', 'on'], ['spin', '旋转中心', 'on']
		];
		return tools.map(([icon, label, on = '']) =>
			`<button class="${on}" aria-label="${label}"><cad-icon name="${icon}"></cad-icon></button>`
		).join('');
	}
}

class ModelView extends CadElement {
	styles() {
		return `
			:host {
				position: relative;
				overflow: hidden;
				background: linear-gradient(#005c9f, #004a86 25%, #003060 55%, #001540 90%, #001034);
			}
			svg { display: block; width: 100%; height: 100%; }
			.edge { fill: none; stroke: #000; shape-rendering: crispEdges; }
			.datum { fill: none; stroke: #85104f; shape-rendering: crispEdges; }
			view-toolbar { position: absolute; top: 7px; left: 50%; transform: translateX(-50%); }
			p {
				position: absolute;
				left: 7px;
				bottom: 36px;
				margin: 0;
				font: 10px/20px "Liberation Mono", "Noto Sans CJK SC", monospace;
				color: #8490a2;
			}
			p span { font-size: 8px; }
		`;
	}
	template() {
		return `
			<svg viewBox="305 171 1135 654" role="img" aria-label="XSEC0001">
				<defs>
					<linearGradient id="wall" gradientUnits="userSpaceOnUse" x1="495" y1="0" x2="813" y2="0">
						<stop offset="0" stop-color="#84aeab"/>
						<stop offset=".15" stop-color="#8ab5b1"/>
						<stop offset=".5" stop-color="#a6dcd8"/>
						<stop offset=".85" stop-color="#b8f8f4"/>
						<stop offset="1" stop-color="#bfffff"/>
					</linearGradient>
					<linearGradient id="bowl" gradientUnits="userSpaceOnUse" x1="530" y1="470" x2="620" y2="560">
						<stop offset="0" stop-color="#84aeab"/>
						<stop offset=".3" stop-color="#8ebab6"/>
						<stop offset="1" stop-color="#abe5e0"/>
					</linearGradient>
				</defs>
				<!-- top rim -->
				<path d="M480 336C540 288 640 274 720 274Q766 274 812 279L1192 320L1118 402H1101L495 455Z" fill="#b6f7f2"/>
				<path class="edge" d="M480 336C540 288 640 274 720 274Q766 274 812 279L1192 320L1118 402"/>
				<!-- walls -->
				<path d="M496 337C545 294 650 279 725 279Q768 279 813 283V401Q768 397 725 397C650 397 545 412 494 455Z" fill="url(#wall)"/>
				<path d="M813 283L1173 323L1101 402V433L812 401Z" fill="#bfffff"/>
				<!-- floor -->
				<path d="M494 455C545 412 650 397 725 397Q768 397 812 401L1101 433V522L606 468L600 490L523 459Z" fill="#b5f4ef"/>
				<path class="edge" d="M496 337C545 294 650 279 725 279Q768 279 813 283L1173 323L1101 402M494 455C545 412 650 397 725 397Q768 397 812 401L1100 433M813 283L812 401"/>
				<!-- bowl -->
				<path d="M523 459C550 430 600 417 655 412L606 467L603 601C560 580 520 530 523 459Z" fill="url(#bowl)"/>
				<path class="edge" d="M523 459C550 430 600 417 655 412L606 467"/>
				<path d="M620 485L667 491C661 540 645 590 618 623Z" fill="#83adaa" stroke="#001a33"/>
				<!-- right side -->
				<path d="M1118 402L1192 320L1190 452L1115 537Z" fill="#83adaa"/>
				<path class="edge" d="M1118 402L1192 320L1190 452L1115 537Z"/>
				<!-- section cut -->
				<path d="M479 336L495 337L493 455L523 459C520 530 556 580 603 601L606 467L1100 522L1101 403L1118 404L1115 537L620 485L618 623C550 595 508 540 508 472L477 468Z" fill="#bfffff" stroke="#e6ff4d" stroke-width="1.500"/>
				<!-- datum planes -->
				<path class="datum" d="M474 332L1119 402L1116 683L471 613ZM1224 317L1069 491L1065 773L1220 600Z"/>
				<path d="M812 265V282" stroke="#7fc4ff"/>
				<circle cx="812" cy="265" r="3" fill="#6ab8f5"/>
				<path d="M812 282L796 280" stroke="#00d82c" stroke-width="1.500"/>
				<path d="M790 279l7-2v5z" fill="#00e63a"/>
				<path d="M813 281l5-5" stroke="#a01030" stroke-width="2"/>
			</svg>
			<view-toolbar></view-toolbar>
			<p><span>横截面</span>:XSEC0001</p>
		`;
	}
}

class StatusBar extends CadElement {
	styles() {
		return `
			:host {
				display: flex;
				justify-content: space-between;
				height: 35px;
				padding: 0 20px 0 5px;
				background: #f0f0f0;
				border-top: 2px solid #8f9396;
			}
			.left, .right { display: flex; align-items: center; }
			.left { gap: 2px; padding-top: 2px; }
			.left i { margin-left: 6px; }
			i { width: 1px; height: 24px; background: #aaa; }
			.right i { height: 100%; }
			.find { display: flex; height: 24px; margin: 0 2px; border: 1px solid #bbb; background: #fff; }
			.find button { display: flex; align-items: center; justify-content: center; width: 27px; }
			.find .drop { width: 14px; border-left: 1px solid #bbb; }
			.gap { width: 41px; }
			.select {
				display: grid;
				grid-template-columns: 1fr 16px;
				align-items: center;
				width: 176px;
				height: 24px;
				margin-left: 96px;
				border: 1px solid #bbb;
				background: #f6f6f6;
			}
			select {
				grid-area: 1 / 1 / 2 / 3;
				appearance: none;
				height: 22px;
				padding: 0 8px;
				border: 0;
				background: none;
				font: inherit;
				color: #777;
			}
			.select cad-arrow { grid-area: 1 / 2; justify-self: center; }
		`;
	}
	template() {
		return `
			<div class="left">
				<quick-button icon="tree" label="模型树" on></quick-button>
				<quick-button icon="browser" label="浏览器"></quick-button>
				<quick-button icon="full" label="全屏"></quick-button>
				<i></i>
			</div>
			<div class="right">
				<i></i>
				<div class="gap"></div>
				<i></i>
				<div class="find">
					<button aria-label="查找"><cad-icon name="find" size="18"></cad-icon></button>
					<button class="drop" aria-label="查找列表"><cad-arrow></cad-arrow></button>
				</div>
				<i></i>
				<div class="select">
					<select aria-label="选择过滤器"><option>几何</option></select>
					<cad-arrow></cad-arrow>
				</div>
			</div>
		`;
	}
}

class TaskBar extends CadElement {
	styles() {
		return `
			:host {
				display: flex;
				justify-content: space-between;
				height: 40px;
				background: linear-gradient(90deg, #021b20, #0b2226 40%, #18272a);
				color: #fff;
			}
			.apps, .tray { display: flex; align-items: center; }
			.apps { gap: 1px; }
			.apps button {
				display: flex;
				align-items: center;
				justify-content: center;
				width: 48px;
				height: 40px;
			}
			.apps .run { background: linear-gradient(#f0b6cf, #f0b6cf) center bottom / 40px 2px no-repeat; }
			.apps .on { background: linear-gradient(#f0b6cf, #f0b6cf) center bottom / 48px 2px no-repeat #3f5254; }
			/* the tray stays above the forum mark */
			.tray { position: relative; z-index: 2; }
			.tray button { display: flex; align-items: center; justify-content: center; width: 24px; height: 40px; }
			.tray .wide { width: 32px; }
			.tray .ime { font-size: 14px; }
			.clock { width: 78px; line-height: 19px; text-align: center; }
			.tray .notify { width: 36px; margin-right: 10px; }
			.tray .desk { width: 5px; border-left: 1px solid #6a7375; }
		`;
	}
	template() {
		return `
			<div class="apps">
				<button aria-label="开始"><cad-icon name="win"></cad-icon></button>
				<button aria-label="任务视图"><cad-icon name="taskView"></cad-icon></button>
				<button class="run" aria-label="浏览器"><cad-icon name="wheel" size="24"></cad-icon></button>
				<button class="run" aria-label="文件资源管理器"><cad-icon name="explorer" size="22"></cad-icon></button>
				<button class="on" aria-label="Creo Parametric"><cad-icon name="app" size="23"></cad-icon></button>
				<button class="run" aria-label="微信"><cad-icon name="wechat" size="24"></cad-icon></button>
			</div>
			<div class="tray">
				<button class="wide" aria-label="Q"><cad-icon name="trayQ"></cad-icon></button>
				<button aria-label="显示隐藏的图标"><cad-icon name="trayUp"></cad-icon></button>
				<button aria-label="安全卫士"><cad-icon name="guard"></cad-icon></button>
				<button aria-label="网络"><cad-icon name="net"></cad-icon></button>
				<button aria-label="音量"><cad-icon name="volume"></cad-icon></button>
				<button class="ime">中</button>
				<button class="wide" aria-label="输入法"><cad-icon name="trayQ"></cad-icon></button>
				<div class="clock">11:36<br>2019/6/9</div>
				<button class="notify" aria-label="通知"><cad-icon name="notify"></cad-icon></button>
				<button class="desk" aria-label="显示桌面"></button>
			</div>
		`;
	}
}

// forum mark that lies over the status bar and behind the tray
class ForumMark extends CadElement {
	styles() {
		return `
			:host {
				position: absolute;
				z-index: 1;
				right: 0;
				bottom: 5px;
				width: 211px;
				height: 60px;
				pointer-events: none;
			}
			.shade { position: absolute; inset: 25px 5px 0 0; background: rgba(190, 195, 195, .42); }
			svg { position: absolute; left: 0; top: 0; width: 64px; height: 60px; }
			strong {
				position: absolute;
				right: 22px;
				top: 2px;
				font-size: 30px;
				line-height: 34px;
				font-weight: 500;
				color: rgba(70, 170, 115, .72);
			}
			small {
				position: absolute;
				right: 9px;
				top: 37px;
				font: 16px/20px "Liberation Sans", sans-serif;
				color: rgba(45, 75, 80, .6);
			}
		`;
	}
	template() {
		return `
			<div class="shade"></div>
			<svg viewBox="0 0 64 60" fill="none">
				<path d="M28 5Q5-3 4 10Q5 25 24 35Q50 48 52 30Q50 16 34 7" stroke="#8290a8" stroke-width="3" opacity=".75"/>
				<path d="M40 13Q24 30 28 48" stroke="#8290a8" stroke-width="3" opacity=".6"/>
				<path d="M46 17Q62 19 56 36Q49 51 34 54" stroke="#c0283c" stroke-width="5" opacity=".7"/>
			</svg>
			<small>www.proewildfire.cn</small>
			<strong>野火论坛</strong>
		`;
	}
}

class CadApp extends CadElement {
	styles() {
		return `
			:host {
				position: relative;
				display: flex;
				flex-direction: column;
				min-height: 100vh;
				overflow: hidden;
			}
			main { display: grid; flex: 1; grid-template-columns: 305px 1fr; }
		`;
	}
	template() {
		return `
			<title-bar></title-bar>
			<ribbon-tabs></ribbon-tabs>
			<cad-ribbon></cad-ribbon>
			<main>
				<side-panel></side-panel>
				<model-view></model-view>
			</main>
			<status-bar></status-bar>
			<task-bar></task-bar>
			<forum-mark></forum-mark>
		`;
	}
}

customElements.define('cad-icon', CadIcon);
customElements.define('cad-arrow', CadArrow);
customElements.define('quick-button', QuickButton);
customElements.define('title-bar', TitleBar);
customElements.define('ribbon-tabs', RibbonTabs);
customElements.define('ribbon-group', RibbonGroup);
customElements.define('ribbon-column', RibbonColumn);
customElements.define('ribbon-button', RibbonButton);
customElements.define('cad-ribbon', CadRibbon);
customElements.define('tree-item', TreeItem);
customElements.define('side-panel', SidePanel);
customElements.define('view-toolbar', ViewToolbar);
customElements.define('model-view', ModelView);
customElements.define('status-bar', StatusBar);
customElements.define('task-bar', TaskBar);
customElements.define('forum-mark', ForumMark);
customElements.define('cad-app', CadApp);
</script>
</body>
</html>
